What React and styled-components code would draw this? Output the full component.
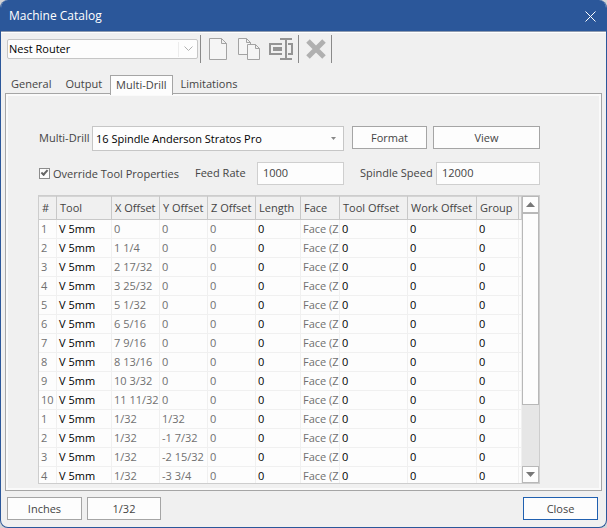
import React from 'react';
import styled, { createGlobalStyle, css } from 'styled-components';

const GlobalStyle = createGlobalStyle`
  *, *::before, *::after { box-sizing: border-box; }
  body { margin: 0; background: #d4d4d6; }
  body, button, input, select {
    font-family: 'Open Sans', 'Noto Sans', sans-serif;
    font-size: 11px;
    color: #444;
  }
`;

const Window = styled.main`
  display: flex;
  flex-direction: column;
  height: 100vh;
  min-height: 360px;
  overflow: hidden;
  border: 1px solid #2b579a;
  border-top: 0;
  border-radius: 8px;
  background: #f0f0f0;
`;

const TitleBar = styled.header`
  display: flex;
  align-items: center;
  justify-content: space-between;
  flex: none;
  height: 33px;
  padding: 0 10px 0 8px;
  background: #2b579a;
  border-bottom: 1px solid #fff;
  box-shadow: inset 0 -1px #8e9bb0;
  color: #fff;
`;

const Title = styled.h1`
  margin: 0;
  font-size: 12px;
  font-weight: 400;
  line-height: 16px;
`;

const IconButton = styled.button`
  display: flex;
  align-items: center;
  justify-content: center;
  padding: 0;
  border: 0;
  background: transparent;
`;

const Toolbar = styled.div`
  display: flex;
  align-items: center;
  flex: none;
  height: 30px;
  margin-top: 1px;
  padding-left: 6px;
`;

const CatalogBox = styled.div`
  display: grid;
  grid-template-columns: minmax(0, 1fr) 18px;
  width: 191px;
  height: 20px;
  margin-right: 2px;
  border: 1px solid #c6c6c6;
  border-radius: 2px;
  background: #fdfdfd;
`;

const CatalogSelect = styled.select`
  grid-area: 1 / 1 / 2 / 3;
  appearance: none;
  min-width: 0;
  margin: 0;
  padding: 0 0 2px 1px;
  border: 0;
  background: linear-gradient(#ececec, #ececec) right 18px center / 1px 15px no-repeat;
  color: #000;
`;

const SelectArrow = styled.svg`
  grid-area: 1 / 2 / 2 / 3;
  place-self: center;
  pointer-events: none;
`;

const Divider = styled.span`
  width: 1px;
  height: 28px;
  background: #8a8a8a;
`;

const ToolGroup = styled.div`
  display: flex;
  align-items: center;
  gap: 7px;
  padding: 0 5px 0 7px;
  height: 26px;
`;

const TabList = styled.div`
  display: flex;
  align-items: flex-end;
  gap: 2px;
  flex: none;
  height: 19px;
  margin: 11px 0 -1px;
  padding-left: 4px;
  z-index: 1;
`;

const Tab = styled.button`
  height: 19px;
  padding: 0 5px 2px;
  border: 1px solid transparent;
  border-bottom: 0;
  background: transparent;
  line-height: 16px;
  ${({ $active }) => $active && css`
    border-color: #a5a5a5;
    background: #fdfdfd;
    height: 20px;
    margin-bottom: -1px;
  `}
`;

const Panel = styled.section`
  display: flex;
  flex-direction: column;
  flex: 1;
  min-height: 0;
  margin: 0 4px;
  padding: 32px 61px 6px 32px;
  border: 1px solid #a5a5a5;
  box-shadow: inset 0 0 0 2px #fafafa;
`;

const FormRow = styled.div`
  display: flex;
  align-items: center;
  flex: none;
  height: ${({ $height }) => $height}px;
  margin-bottom: ${({ $after }) => $after}px;
  padding-left: 1px;
`;

const Label = styled.label`
  flex: none;
  width: ${({ $width }) => $width}px;
  padding-bottom: 2px;
  line-height: 20px;
`;

const DrillBox = styled.div`
  display: grid;
  grid-template-columns: minmax(0, 1fr) 20px;
  flex: 1;
  height: 25px;
  margin-right: 8px;
  border: 1px solid #c6c6c6;
  background: #fdfdfd;
`;

const DrillSelect = styled.select`
  grid-area: 1 / 1 / 2 / 3;
  appearance: none;
  min-width: 0;
  padding: 0 20px 0 3px;
  border: 0;
  background: transparent;
  color: #000;
`;

const Button = styled.button`
  flex: none;
  width: ${({ $width }) => $width}px;
  height: 23px;
  padding: 0;
  border: 1px solid ${({ $primary }) => ($primary ? '#2060b0' : '#a5a5a5')};
  background: #fdfdfd;
  line-height: 21px;
`;

const ButtonGroup = styled.div`
  display: flex;
  align-self: flex-start;
  gap: ${({ $gap }) => $gap}px;
`;

const CheckLabel = styled.label`
  display: flex;
  align-items: center;
  gap: 3px;
  flex: 1;
  line-height: 20px;
  white-space: nowrap;
`;

const Check = styled.input`
  appearance: none;
  width: 11px;
  height: 11px;
  margin: 0;
  border: 1px solid #8c8c8c;
  background: #fdfdfd;
  &:checked::before {
    content: '';
    display: block;
    width: 7px;
    height: 4px;
    margin: 1px;
    border: solid #666;
    border-width: 0 0 2px 2px;
    transform: rotate(-48deg);
  }
`;

const NumberBox = styled.input`
  flex: none;
  width: ${({ $width }) => $width}px;
  height: 23px;
  margin-right: ${({ $after }) => $after || 0}px;
  padding: 0 5px 2px;
  border: 1px solid #cfcfcf;
  background: #fdfdfd;
`;

const GridFrame = styled.div`
  display: flex;
  flex: 1;
  min-height: 0;
  border: 1px solid #cdcdcd;
  background: #fdfdfd;
`;

const GridView = styled.div`
  flex: 1;
  min-width: 0;
  overflow: hidden;
`;

const Grid = styled.table`
  width: 100%;
  table-layout: fixed;
  border-collapse: separate;
  border-spacing: 0;
`;

const HeadCell = styled.th`
  height: 24px;
  padding: 0 0 0 3px;
  border-right: 1px solid #c8c8c8;
  border-bottom: 1px solid #c8c8c8;
  background: #f0f0f0;
  box-shadow: inset 0 1px #d4d4d4;
  font-weight: 400;
  text-align: left;
  white-space: nowrap;
  overflow: hidden;
`;

const Cell = styled.td`
  height: 19px;
  padding: 0 0 0 2px;
  border-right: 1px solid #f0f0f0;
  border-bottom: 1px solid #f0f0f0;
  line-height: 18px;
  color: ${({ $editable }) => ($editable ? '#000' : '#707070')};
  white-space: nowrap;
  overflow: hidden;
`;

const ScrollBar = styled.div`
  display: flex;
  flex-direction: column;
  flex: none;
  width: 17px;
  background: #e6e6e6;
`;

const ScrollArrow = styled(IconButton)`
  height: 17px;
  border: 1px solid #b8b8b8;
  background: #fdfdfd;
`;

const ScrollTrack = styled.div`
  flex: 1;
`;

const ScrollThumb = styled.div`
  height: 76%;
  border: 1px solid #b8b8b8;
  background: #fdfdfd;
`;

const Footer = styled.footer`
  display: flex;
  justify-content: space-between;
  flex: none;
  padding: 6px 8px 7px 6px;
`;

const columns = [
  { name: '#', width: 18 },
  { name: 'Tool', width: 55, editable: true },
  { name: 'X Offset', width: 48 },
  { name: 'Y Offset', width: 48 },
  { name: 'Z Offset', width: 48 },
  { name: 'Length', width: 45, editable: true },
  { name: 'Face', width: 39 },
  { name: 'Tool Offset', width: 68, editable: true },
  { name: 'Work Offset', width: 69, editable: true },
  { name: 'Group', width: 42, editable: true },
  { name: '' },
];

const spindles = [
  ['1', '0', '0'],
  ['2', '1 1/4', '0'],
  ['3', '2 17/32', '0'],
  ['4', '3 25/32', '0'],
  ['5', '5 1/32', '0'],
  ['6', '6 5/16', '0'],
  ['7', '7 9/16', '0'],
  ['8', '8 13/16', '0'],
  ['9', '10 3/32', '0'],
  ['10', '11 11/32', '0'],
  ['1', '1/32', '1/32'],
  ['2', '1/32', '-1 7/32'],
  ['3', '1/32', '-2 15/32'],
  ['4', '1/32', '-3 3/4'],
];

const tabs = ['General', 'Output', 'Multi-Drill', 'Limitations'];

const NewIcon = () => (
  <svg width="22" height="24" viewBox="0 0 22 24" fill="#f5f5f5" stroke="#a3a3a3" aria-hidden="true">
    <path d="M1.500 1.500h12l5 5v16h-17zM13.500 1.500v5h5" />
  </svg>
);

const CopyIcon = () => (
  <svg width="24" height="24" viewBox="0 0 24 24" fill="#f5f5f5" stroke="#a3a3a3" aria-hidden="true">
    <path d="M1.500 1.500h8l4 4v12h-12zM9.500 1.500v4h4" />
    <path d="M10.500 7.500h8l4 4v11h-12zM18.500 7.500v4h4" />
  </svg>
);

const RenameIcon = () => (
  <svg width="25" height="24" viewBox="0 0 25 24" fill="none" stroke="#949494" strokeWidth="2" aria-hidden="true">
    <path d="M14 7H2v10h12M20 7h4v10h-4M12 2h12M12 22h12M18 2v20" />
    <path d="M5 12h9" strokeWidth="4" />
  </svg>
);

const DeleteIcon = () => (
  <svg width="20" height="20" viewBox="0 0 20 20" fill="none" stroke="#b0b0b0" strokeWidth="5" aria-hidden="true">
    <path d="M2 2l16 16M18 2L2 18" />
  </svg>
);

const Triangle = ({ down }) => (
  <svg width="9" height="5" viewBox="0 0 9 5" fill="#777" aria-hidden="true">
    <path d={down ? 'M0 0h9L4.500 5z' : 'M0 5h9L4.500 0z'} />
  </svg>
);

export default function App() {
  return (
    <>
      <GlobalStyle />
      <Window>
        <TitleBar>
          <Title>Machine Catalog</Title>
          <IconButton aria-label="Close window">
            <svg width="11" height="11" viewBox="0 0 11 11" stroke="#fff" aria-hidden="true">
              <path d="M.5.5l10 10M10.500.5l-10 10" />
            </svg>
          </IconButton>
        </TitleBar>

        <Toolbar>
          <CatalogBox>
            <CatalogSelect aria-label="Machine">
              <option>Nest Router</option>
            </CatalogSelect>
            <SelectArrow width="9" height="6" viewBox="0 0 9 6" fill="none" stroke="#b0b0b0">
              <path d="M.5.5l4 4 4-4" />
            </SelectArrow>
          </CatalogBox>
          <Divider />
          <ToolGroup>
            <IconButton aria-label="New"><NewIcon /></IconButton>
            <IconButton aria-label="Copy"><CopyIcon /></IconButton>
            <IconButton aria-label="Rename"><RenameIcon /></IconButton>
          </ToolGroup>
          <Divider />
          <ToolGroup>
            <IconButton aria-label="Delete"><DeleteIcon /></IconButton>
          </ToolGroup>
          <Divider />
        </Toolbar>

        <TabList role="tablist">
          {tabs.map((name) => (
            <Tab key={name} role="tab" aria-selected={name === 'Multi-Drill'} $active={name === 'Multi-Drill'}>
              {name}
            </Tab>
          ))}
        </TabList>

        <Panel role="tabpanel" aria-label="Multi-Drill">
          <FormRow $height={25} $after={11}>
            <Label htmlFor="drill" $width={53}>Multi-Drill</Label>
            <DrillBox>
              <DrillSelect id="drill">
                <option>16 Spindle Anderson Stratos Pro</option>
              </DrillSelect>
              <SelectArrow width="5" height="3" viewBox="0 0 5 3" fill="#888">
                <path d="M0 0h5L2.500 3z" />
              </SelectArrow>
            </DrillBox>
            <ButtonGroup $gap={6}>
              <Button $width={75}>Format</Button>
              <Button $width={107}>View</Button>
            </ButtonGroup>
          </FormRow>

          <FormRow $height={23} $after={10}>
            <CheckLabel>
              <Check type="checkbox" defaultChecked />
              Override Tool Properties
            </CheckLabel>
            <Label htmlFor="feed" $width={62}>Feed Rate</Label>
            <NumberBox id="feed" defaultValue="1000" $width={87} $after={16} />
            <Label htmlFor="speed" $width={76}>Spindle Speed</Label>
            <NumberBox id="speed" defaultValue="12000" $width={104} />
          </FormRow>

          <GridFrame>
            <GridView>
              <Grid>
                <colgroup>
                  {columns.map(({ name, width }) => (
                    <col key={name} width={width} />
                  ))}
                </colgroup>
                <thead>
                  <tr>
                    {columns.map(({ name }) => (
                      <HeadCell key={name} scope="col">{name}</HeadCell>
                    ))}
                  </tr>
                </thead>
                <tbody>
                  {spindles.map(([number, x, y], row) => (
                    <tr key={row}>
                      {[number, 'V 5mm', x, y, '0', '0', 'Face (Z', '0', '0', '0', ''].map((value, i) => (
                        <Cell key={i} $editable={columns[i].editable}>{value}</Cell>
                      ))}
                    </tr>
                  ))}
                </tbody>
              </Grid>
            </GridView>
            <ScrollBar>
              <ScrollArrow aria-label="Scroll up"><Triangle /></ScrollArrow>
              <ScrollTrack><ScrollThumb /></ScrollTrack>
              <ScrollArrow aria-label="Scroll down"><Triangle down /></ScrollArrow>
            </ScrollBar>
          </GridFrame>
        </Panel>

        <Footer>
          <ButtonGroup $gap={5}>
            <Button $width={75}>Inches</Button>
            <Button $width={74}>1/32</Button>
          </ButtonGroup>
          <Button $width={75} $primary>Close</Button>
        </Footer>
      </Window>
    </>
  );
}
